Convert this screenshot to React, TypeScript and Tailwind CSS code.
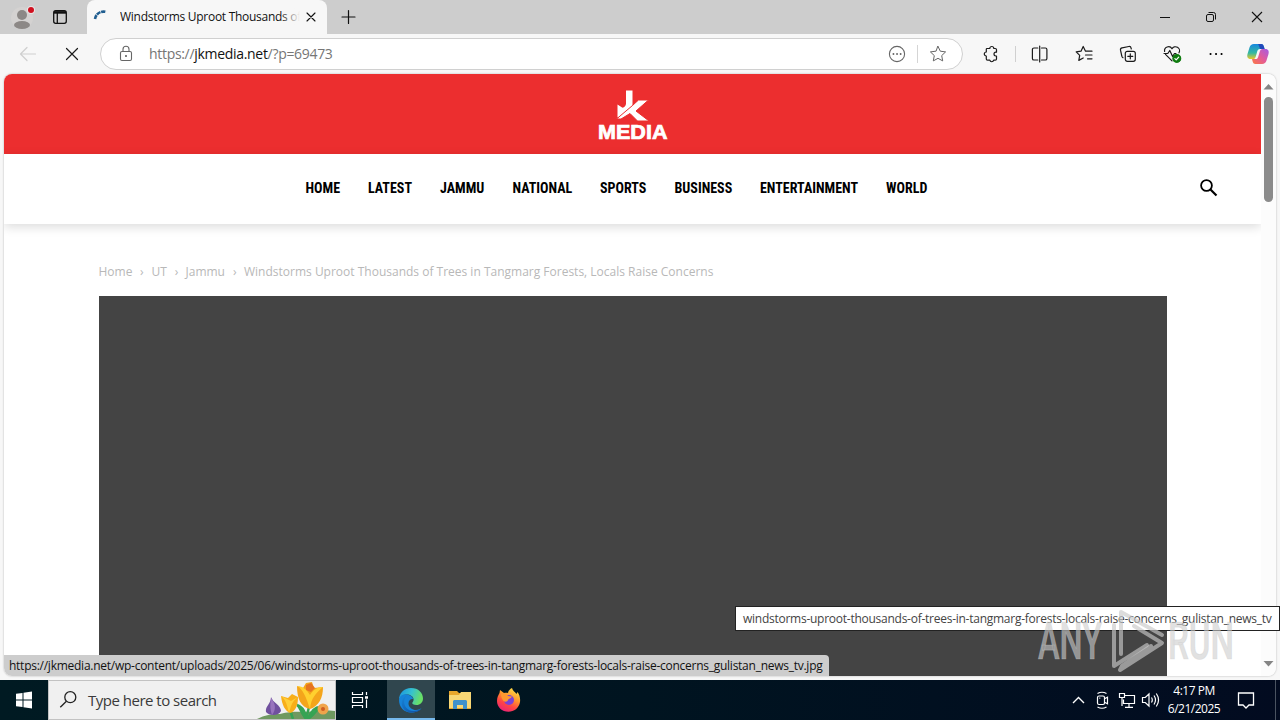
import type { ReactNode } from "react";

const UI = "font-['Open_Sans','Noto_Sans',sans-serif]";

function Line({ children, className = "", w = 20, sw = 1.2 }: { children: ReactNode; className?: string; w?: number; sw?: number }) {
  return (
    <svg width={w} height={w} viewBox="0 0 20 20" fill="none" stroke="currentColor" strokeWidth={sw} strokeLinecap="round" strokeLinejoin="round" className={"shrink-0 " + className}>
      {children}
    </svg>
  );
}

const STAR = "M10 2.4l2.3 4.8 5.3.7-3.9 3.7 1 5.3-4.7-2.6-4.7 2.6 1-5.3-3.9-3.7 5.3-.7z";

function TitleBar() {
  return (
    <header className="flex h-[34px] shrink-0 bg-[#cdcdcd]">
      <div className="flex w-[87px] items-center">
        <svg width="30" height="32" viewBox="0 0 30 32" className="ml-2">
          <circle cx="14" cy="17" r="11" fill="#d4d2d1" />
          <circle cx="14" cy="14" r="5" fill="#8c8886" />
          <ellipse cx="14" cy="24" rx="8" ry="4" fill="#8c8886" />
          <circle cx="23" cy="9" r="4" fill="#e9e4e4" />
          <circle cx="23" cy="9" r="3" fill="#d0101f" />
        </svg>
        <svg width="16" height="16" viewBox="0 0 16 16" className="ml-[14px]" fill="none" stroke="#111" strokeWidth="1.3">
          <rect x="1.7" y="1.7" width="12.6" height="12.6" rx="2" />
          <path d="M2 3.4h12" strokeWidth="2.6" />
          <path d="M5.3 4v10" />
        </svg>
      </div>
      <div className="flex w-[240px] items-center rounded-t-lg bg-[#f7f7f7]">
        <svg width="16" height="16" viewBox="0 0 16 16" className="mb-[4px] ml-[5px]" fill="none" stroke="#1f5d8f" strokeWidth="2.6">
          <path d="M3 12A8.500 8.500 0 0 1 14 5" strokeDasharray="4.200 .7" />
        </svg>
        <div className="relative ml-3 w-[180px] overflow-hidden">
          <span className={UI + " block whitespace-nowrap text-[12px] leading-[18px] tracking-[-0.28px] text-[#111]"}>Windstorms Uproot Thousands of</span>
          <div className="absolute inset-y-0 right-0 w-5 bg-linear-to-r from-transparent to-[#f7f7f7]" />
        </div>
        <Line className="ml-[3px] text-[#111]" w={16} sw={1.4}><path d="M5 5l10 10M15 5L5 15" /></Line>
      </div>
      <div className="flex flex-1 items-center text-[#111]">
        <Line className="ml-[11px]" sw={1.2}><path d="M10.500 3.500v13M4 10h13" /></Line>
        <div className="ml-auto flex">
          <svg width="46" height="34" viewBox="0 0 46 34" stroke="#111" fill="none"><path d="M18 17.5h10" /></svg>
          <svg width="46" height="34" viewBox="0 0 46 34" stroke="#111" fill="none"><rect x="18.5" y="14.5" width="7" height="7" rx="1.5" /><path d="M20.500 12.500h5a2 2 0 0 1 2 2v5" /></svg>
          <svg width="46" height="34" viewBox="0 0 46 34" stroke="#111" fill="none" strokeWidth="1.1"><path d="M18 12l10 10M28 12l-10 10" /></svg>
        </div>
      </div>
    </header>
  );
}

function Toolbar() {
  return (
    <div className="flex h-10 shrink-0 items-center bg-[#f7f7f7] text-[#1b1b1b]">
      <Line className="ml-[18px] text-[#cfcfcf]"><path d="M17.5 10H3M9 3.5L2.5 10 9 16.5" /></Line>
      <Line className="ml-6" sw={1.2}><path d="M4.500 4.500l11 11M15.500 4.500l-11 11" /></Line>
      <div className="ml-[18px] flex h-8 w-[863px] items-center rounded-full border border-[#d0d0d0] bg-white text-[#666]">
        <Line className="ml-[15px]" sw={1.1}><rect x="4.500" y="7.500" width="11" height="9" rx="1.500" /><path d="M7 7.500V5.200a3 3 0 0 1 6 0v2.300" /><circle cx="10" cy="12" r=".5" fill="currentColor" /></Line>
        <span className={UI + " ml-[13px] whitespace-nowrap text-[14px] leading-5 tracking-[-0.31px] text-[#767676]"}>https://<span className="text-[#111]">jkmedia.net</span>/?p=69473</span>
        <Line className="ml-auto" sw={1.1}><circle cx="10" cy="10" r="7.600" /><path d="M6.400 10h.1M10 10h.1M13.600 10h.1" strokeWidth="1.800" /></Line>
        <div className="ml-[10px] h-[18px] w-px bg-[#d5d5d5]" />
        <Line className="ml-[10px] mr-[14px]" sw={1}><path d={STAR} /></Line>
      </div>
      <Line className="ml-[18px]"><path d="M6 4.500h2.800a2 2 0 0 1 4 0h1.500a1.200 1.200 0 0 1 1.200 1.200v2.500h-.6a1.900 1.900 0 0 0 0 3.800h.6v3a1.200 1.200 0 0 1-1.200 1.200h-1.600a2 2 0 0 1-3.900 0H6.500a1.200 1.200 0 0 1-1.200-1.200V12a2 2 0 0 1 0-4V5.200a.7.7 0 0 1 .7-.7z" /></Line>
      <div className="ml-[14px] h-4 w-px bg-[#d0d0d0]" />
      <Line className="ml-[14px]"><path d="M7.8 4H4a1.600 1.600 0 0 0-1.600 1.600v8.800A1.600 1.600 0 0 0 4 16h3.800M11.500 4H15.300a1.600 1.600 0 0 1 1.600 1.600v8.800a1.600 1.600 0 0 1-1.600 1.600h-3.800M9.700 2v16" /></Line>
      <Line className="ml-[25px]"><path d="M10.500 7.2L8.2 2.5 6 7.2l-4.8.7 3.5 3.5-.9 5 4.400-2.400M10.500 7.200h6.500M10.500 11H17M12.500 14.800H17" /></Line>
      <Line className="ml-[23px]"><rect x="7.3" y="7.3" width="10" height="10" rx="2" /><path d="M12.300 9.800v5M9.800 12.300h5M5 13.700A2 2 0 0 1 3.800 12L2.500 6.200a2 2 0 0 1 1.600-2.300l6.700-1.400a2 2 0 0 1 2.300 1.600l.2.900" /></Line>
      <Line className="ml-6"><path d="M10 16.800L3.500 10.300M2.600 7.500a4 4 0 0 1 7.400-2.700 4 4 0 0 1 7 4M2 9.500h3.800l2-3 2.800 6 1.900-3H14" /><circle cx="14.8" cy="14.4" r="3.900" fill="#107c10" stroke="#107c10" /><path d="M12.900 14.600l1.300 1.200 2.500-2.700" stroke="#fff" /></Line>
      <Line className="ml-6" sw={2}><path d="M4.500 10h.1M10 10h.1M15.500 10h.1" stroke="#000" /></Line>
      <svg width="24" height="22" viewBox="0 0 24 22" className="ml-5">
        <defs>
          <linearGradient id="ca" x1="0" y1="0" x2="0" y2="1"><stop stopColor="#1687df" /><stop offset=".6" stopColor="#35b9a0" /><stop offset="1" stopColor="#ecc729" /></linearGradient>
          <linearGradient id="cb" x1="1" y1="0" x2="0" y2="1"><stop stopColor="#a45be5" /><stop offset=".5" stopColor="#e35a9a" /><stop offset="1" stopColor="#fb7a42" /></linearGradient>
        </defs>
        <path d="M8 1h7c2 0 2.400 1.300 3 3l.6 2H14c-1.800 0-2.300 1-2.800 2.600l-1.400 4.800C9.300 15 8.500 16 7 16H4.500C1.500 16 .8 13.500 1.500 11l2-6.500C4.200 2.300 5.500 1 8 1z" fill="url(#ca)" />
        <path d="M16 21H9.500c-2 0-2.400-1.300-3-3L6 16h3.500c1.800 0 2.300-1 2.800-2.600l1.500-4.800C14.300 7 15 6 16.500 6h3c3 0 3.700 2.500 3 5l-2 6.500C19.800 19.700 18.500 21 16 21z" fill="url(#cb)" />
        <path d="M12 1h3c2 0 2.400 1.300 3 3l.6 2H14c-.6-2-1-4-2-5z" fill="#2149ba" />
      </svg>
    </div>
  );
}

function Logo() {
  return (
    <svg width="74" height="54" viewBox="0 0 74 54" fill="#fff">
      <path d="M30 2.500h6.500V16c0 3-1.500 5-4 7-3.500 3-6.500 5-11 6.500V16.500l5 3.300c2-.7 3.500-2 3.500-4.300z" />
      <path d="M20.500 31L36.500 17.500 42.500 12h10L40 23l13 10H41.500l-7.500-7.500L25 31z" stroke="#ec2e2f" strokeWidth="1" />
      <text x="2" y="51" textLength="69.500" lengthAdjust="spacingAndGlyphs" fontFamily="Liberation Sans, sans-serif" fontWeight="700" fontSize="19.500" stroke="#fff" strokeWidth=".7">MEDIA</text>
    </svg>
  );
}

const NAV = [
  ["HOME", "w-[34.5px]"], ["LATEST", "w-[44px]"], ["JAMMU", "w-[44.5px]"], ["NATIONAL", "w-[59.5px]"],
  ["SPORTS", "w-[46.5px]"], ["BUSINESS", "w-[57.5px]"], ["ENTERTAINMENT", "w-[98px]"], ["WORLD", "w-[42px]"],
];

function WebPage() {
  return (
    <div className="flex min-w-0 flex-1 flex-col bg-white">
      <div className="flex h-20 shrink-0 bg-[#ec2e2f] pl-[592px] pt-[14px]"><Logo /></div>
      <nav className="z-10 flex h-[70px] shrink-0 items-center bg-white pb-[2px] pl-[301.5px] shadow-[0_3px_10px_rgba(0,0,0,0.14)]">
        <div className="flex gap-7">
          {NAV.map(([label, w]) => (
            <a key={label} className={"whitespace-nowrap font-['Roboto_Condensed',Roboto,sans-serif] text-[14px] font-bold leading-5 text-black [font-stretch:75%] " + w}>{label}</a>
          ))}
        </div>
        <svg width="20" height="20" viewBox="0 0 20 20" className="ml-auto mr-[42px]" fill="none" stroke="#000"><circle cx="7.500" cy="7.500" r="5.400" strokeWidth="1.800" /><path d="M11.500 11.500l6 6" strokeWidth="2.200" /></svg>
      </nav>
      <div className="flex min-h-0 flex-1 flex-col pl-[94.5px] pr-[94px]">
        <div className="mt-[38px] flex h-5 shrink-0 items-center whitespace-nowrap font-['Open_Sans',sans-serif] text-[12px] leading-5 text-[#b8b8b8]">
          <span className="w-[53px]">Home<span className="ml-[7.5px]">›</span></span>
          <span className="w-[34px]">UT<span className="ml-[8px]">›</span></span>
          <span className="w-[58.5px]">Jammu<span className="ml-[8px]">›</span></span>
          <span>Windstorms Uproot Thousands of Trees in Tangmarg Forests, Locals Raise Concerns</span>
        </div>
        <div className="mt-[14px] flex-1 bg-[#444]" />
      </div>
    </div>
  );
}

function Watermark() {
  return (
    <svg width="200" height="70" viewBox="0 0 200 70" className="pointer-events-none absolute left-[1036px] top-[605px] z-40" fill="none">
      <g fill="#cdcdcd" fillOpacity=".62" stroke="#cdcdcd" strokeOpacity=".5" strokeWidth=".7" fontFamily="Roboto, sans-serif" fontSize="52" fontWeight="500">
        <text x="2" y="54" textLength="64" lengthAdjust="spacingAndGlyphs">ANY</text>
        <text x="132" y="54" textLength="66" lengthAdjust="spacingAndGlyphs">RUN</text>
      </g>
      <g stroke="#c9c9c9" strokeOpacity=".65" strokeWidth="4" strokeLinejoin="round" strokeLinecap="round">
        <path d="M78 20v41l33-21" />
        <path d="M85 49V7l41 23" />
        <path d="M98 21l28 17-42 27 2-4 29-20" />
      </g>
    </svg>
  );
}

function Flowers() {
  return (
    <svg width="80" height="38" viewBox="0 0 80 38">
      <path d="M2 38c8-4 14-5 23-5 14-4 24-1 33-3 8-1 15-1 22 0v8z" fill="#6f9960" />
      <path d="M35 29l3 9M54 26l-3 12M51 38c-6-8-6-13-9-14 7 3 8 7 9 14zM53 38c4-10 9-12 12-12-3 2-5 7-12 12z" stroke="#35a354" fill="#43b565" strokeWidth="2.500" />
      <path d="M11 31c-1-6 5-8 5-15 2 6 10 8 10 14-2 5-12 5-15 1z" fill="#70509e" />
      <path d="M16 17c-1 7-1 11 1 17 4-5 4-11-1-17z" fill="#9874bd" />
      <path d="M26 15l7 2 4-4 6 3c0 9-3 15-8 16-5-2-8-8-9-17z" fill="#f8ae19" />
      <path d="M26 15c5 4 6 9 8 17 2-6 2-11 9-16l-7 4z" fill="#ffcf38" />
      <path d="M42 5l6 2 3-5 6-1 2 6 9-1c0 11-4 19-13 22-9-2-13-10-13-23z" fill="#f4a51b" />
      <path d="M42 5c6 3 9 11 13 23 1-11 6-16 13-22-6 0-10 3-13 8-3-5-7-9-13-9z" fill="#ffd02f" />
      <path d="M51 4l5-2 4 5-4 4-5-2z" fill="#e57420" />
      <circle cx="68" cy="28" r="5.500" fill="#f0a44b" /><circle cx="68" cy="28" r="2" fill="#cf5d22" />
    </svg>
  );
}

function TaskBar() {
  return (
    <footer className={UI + " flex h-10 shrink-0 items-center bg-linear-to-r from-[#001a22] via-[#001420] to-[#020b20] text-white"}>
      <svg width="48" height="40" viewBox="0 0 48 40" fill="#fff"><path d="M16 13.800l6.500-.9v6.600H16zM23.500 12.700l8.500-1.200v8H23.500zM16 20.500h6.500v6.600l-6.500-.9zM23.500 20.500H32v8l-8.500-1.200z" /></svg>
      <div className="flex h-10 w-72 items-center border border-[#c2c2c2] bg-[#f0f0f0]">
        <svg width="20" height="20" viewBox="0 0 20 20" className="ml-[10px]" fill="none" stroke="#222" strokeWidth="1.3"><circle cx="11.3" cy="7.2" r="5.5" /><path d="M7.400 11.200L1.300 17.300" /></svg>
        <span className="ml-[9px] whitespace-nowrap text-[15px] leading-5 tracking-[-0.5px] text-[#3a3a3a]">Type here to search</span>
        <div className="ml-auto"><Flowers /></div>
      </div>
      <svg width="51" height="40" viewBox="0 0 51 40" fill="none" stroke="#fff" strokeWidth="1.2"><path d="M16.500 12v2.500h10V12M16.500 28v-2.500h10V28M16.500 17.500h10v5h-10zM30.500 12v3M30.500 19.500V28" /><path d="M29 17.500h3" strokeWidth="2.500" /></svg>
      <div className="flex h-10 w-12 flex-col items-center border-b-2 border-[#76b9ed] bg-[#30464e]">
        <svg width="26" height="26" viewBox="0 0 26 26" className="mt-[7px]">
          <defs>
            <linearGradient id="ea" x1="0" y1="0" x2="1" y2=".3"><stop stopColor="#1790df" /><stop offset=".55" stopColor="#36c1d0" /><stop offset="1" stopColor="#68df67" /></linearGradient>
            <linearGradient id="eb" x1="0" y1="0" x2="1" y2="1"><stop stopColor="#1686d9" /><stop offset="1" stopColor="#114a9d" /></linearGradient>
          </defs>
          <path d="M1 13C1 6 6 1 13 1c7.500 0 12 5 12 10.500 0 4-3 6.500-6.500 6.500-3 0-4.700-1.200-4.200-2.200.7-1 1.300-1.800 1.300-3.300C15.600 9.500 12 7.500 9 7.500c-4 0-7.500 2.500-8 5.500z" fill="url(#ea)" />
          <path d="M1 13c.3-4 4-6.500 8-5.500 3.500.5 6 2.500 6 4.500-2-.5-4.500 1-4.500 4.500 0 4 4 6.500 7.500 6.500 2.500 0 4.500-1.200 5.500-2-1.500 2.500-5.500 4.500-10.500 4.500C6 25.500 1 20 1 13z" fill="#1683d8" />
          <path d="M9.500 8.200C5.500 10.500 5 17 8.500 21c3 3.500 9 4 14.500 1-1.500 2-5 3.500-10 3.500-4 0-7-2.500-8.500-5.500-2-5 0-10 5-11.800z" fill="url(#eb)" />
        </svg>
      </div>
      <svg width="24" height="22" viewBox="0 0 24 22" className="ml-[13px]">
        <path d="M1 2h8l2 2h12v16H1z" fill="#e8a72c" /><path d="M1 6h22v13H1z" fill="#f8d775" /><path d="M13 3h10v3H11z" fill="#f8d775" />
        <path d="M5 20v-8l1-1h12l1 1v8h-4v-4H9v4z" fill="#3f91cb" />
      </svg>
      <svg width="26" height="26" viewBox="0 0 26 26" className="ml-6">
        <defs>
          <linearGradient id="fa" x1=".8" y1="0" x2=".3" y2="1"><stop stopColor="#ffe34a" /><stop offset=".4" stopColor="#ff982d" /><stop offset=".7" stopColor="#ff4543" /><stop offset="1" stopColor="#ea2278" /></linearGradient>
        </defs>
        <path d="M3.500 6l.5-3 4 3c1.500-.3 3-.2 4 0C12.500 3.500 14 2 16 1c.5 2.500 3 4 4.500 6L21.500 5c2 2.500 3 6 2.500 10-1 6-6 9.800-11.500 9.800C6 24.800 1 20 1 14c0-3 1-5.500 2.500-8z" fill="url(#fa)" />
        <circle cx="13" cy="13" r="5" fill="#7a42d6" /><path d="M5 7c3-1 6 0 7 2l4 .5c-1 2-3.500 2-4 3.500-.5 2-3 2-4.500 1C6 12 5 10 5 7z" fill="#ff9830" />
      </svg>
      <div className="ml-auto flex h-10 items-center">
        <svg width="92" height="40" viewBox="0 0 92 40" fill="none" stroke="#fff" strokeWidth="1.2">
          <path d="M4 23l5.500-5.500L15 23" strokeWidth="1.4" />
          <rect x="28.500" y="16" width="7" height="8.500" rx="1.500" /><path d="M35.500 18.700l3-1.500v6.500l-3-1.500M28.500 13.500q4.500-2.500 9 0M28.500 27q4.500 2.500 9 0M30.300 18.200h1" />
          <path d="M56 15.500h9.500v8h-11v-4M60 23.500V27M56 27.300h8M50.500 13.500h5v4h-5zM53 17.500v8.500" />
          <path d="M73.500 17.500h2.800l3.700-3.500v12l-3.700-3.500h-2.800zM82.500 17.500q1.600 2.500 0 5M85 15.500q3 4.500 0 9M87.300 13.500q4.500 6.500 0 13" />
        </svg>
        <div className="ml-[3px] flex w-[60px] flex-col items-center whitespace-nowrap text-[12px] leading-[18px] tracking-[-0.5px]"><span>4:17 PM</span><span>6/21/2025</span></div>
        <svg width="22" height="40" viewBox="0 0 22 40" className="ml-[11px] mr-[18px]" fill="none" stroke="#fff" strokeWidth="1.3"><path d="M3.500 13h15v12H14l-3 3-3-3H3.500z" /></svg>
        <div className="mr-[4px] h-10 w-px bg-[#4a5361]" />
      </div>
    </footer>
  );
}

export default function App() {
  return (
    <div className="relative flex h-[720px] w-[1280px] flex-col overflow-hidden bg-[#f7f7f7]">
      <TitleBar />
      <Toolbar />
      <main className="mx-1 mb-1 flex min-h-0 flex-1 overflow-hidden rounded-lg shadow-[0_0_2px_rgba(0,0,0,0.3)]">
        <WebPage />
        <div className="z-20 flex w-[15px] shrink-0 flex-col items-center bg-[#fcfcfc]">
          <svg width="15" height="23" viewBox="0 0 15 23" fill="#858585"><path d="M2.500 15.500l5-5.500 5 5.500z" /></svg>
          <div className="h-[105px] w-[9px] rounded-full bg-[#8b8b8b]" />
          <svg width="15" height="20" viewBox="0 0 15 20" className="mt-auto" fill="#858585"><path d="M2.500 5l5 5.500 5-5.500z" /></svg>
        </div>
      </main>
      <TaskBar />
      <div className={UI + " absolute left-1 top-[655px] z-30 h-[21px] w-[825px] whitespace-nowrap rounded-bl-lg rounded-tr-[4px] bg-[#cdcdcd] pl-[5px] text-[12px] leading-[21px] tracking-[-0.257px] text-[#111]"}>https://jkmedia.net/wp-content/uploads/2025/06/windstorms-uproot-thousands-of-trees-in-tangmarg-forests-locals-raise-concerns_gulistan_news_tv.jpg</div>
      <div className={UI + " absolute left-[735px] top-[606px] z-30 h-[25px] w-[545px] whitespace-nowrap border border-[#222] bg-white pl-[7px] text-[12px] leading-[24px] tracking-[-0.257px] text-[#444]"}>windstorms-uproot-thousands-of-trees-in-tangmarg-forests-locals-raise-concerns_gulistan_news_tv</div>
      <Watermark />
    </div>
  );
}
